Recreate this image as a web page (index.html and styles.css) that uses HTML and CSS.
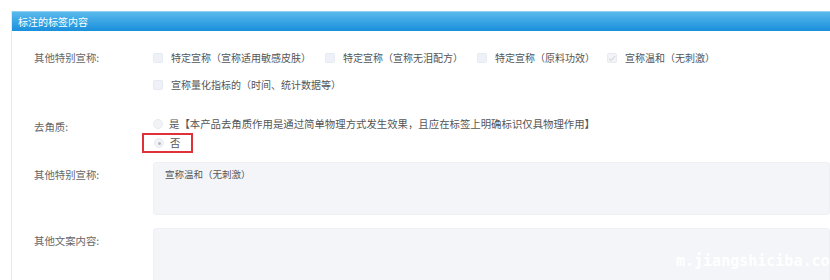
FILE: index.html
```html
<!DOCTYPE html>
<html lang="zh">
<head>
<meta charset="utf-8">
<link rel="stylesheet" href="styles.css">
</head>
<body>
<div class="panel">
  <div class="panel-head">标注的标签内容</div>
  <div class="panel-body">
    <div class="row row-checks">
      <div class="label">其他特别宣称:</div>
      <div class="field checks">
        <label class="opt"><span class="box"></span>特定宣称（宣称适用敏感皮肤）</label>
        <label class="opt"><span class="box"></span>特定宣称（宣称无泪配方）</label>
        <label class="opt"><span class="box"></span>特定宣称（原料功效）</label>
        <label class="opt"><span class="box checked"><svg width="8" height="7" viewBox="0 0 8 7"><path d="M1 3.5 L3.2 5.6 L7 1.2" fill="none" stroke="#c8ccd6" stroke-width="1"/></svg></span>宣称温和（无刺激）</label>
        <label class="opt"><span class="box"></span>宣称量化指标的（时间、统计数据等）</label>
      </div>
    </div>
    <div class="row row-radios">
      <div class="label">去角质:</div>
      <div class="field radios">
        <label class="opt"><span class="radio"></span>是【本产品去角质作用是通过简单物理方式发生效果，且应在标签上明确标识仅具物理作用】</label>
        <label class="opt opt-marked"><span class="radio on"></span>否</label>
      </div>
    </div>
    <div class="row row-text">
      <div class="label">其他特别宣称:</div>
      <div class="field"><div class="textarea">宣称温和（无刺激）</div></div>
    </div>
    <div class="row row-text">
      <div class="label">其他文案内容:</div>
      <div class="field"><div class="textarea tall"></div></div>
    </div>
  </div>
</div>
<div class="watermark">m.jiangshiciba.com</div>
</body>
</html>
```
FILE: styles.css
```css
html, body {
  margin: 0;
  padding: 0;
  background: #fff;
  overflow: hidden;
}
body {
  width: 830px;
  height: 280px;
  font-family: "Noto Sans CJK SC", "Noto Sans", sans-serif;
  font-size: 10.4px;
  color: #555;
  position: relative;
}
.panel {
  margin: 11px 0 0 11px;
  border-left: 1px solid #e6e9ee;
  height: 269px;
}
.panel-head {
  height: 20px;
  line-height: 19px;
  padding-left: 6px;
  color: #fff;
  font-size: 10px;
  background: linear-gradient(#5ab9ec, #1a8fdc);
  border-top: 1px solid #8fd0f3;
  box-sizing: border-box;
}
.panel-body {
  padding-top: 18px;
}
.row {
  display: flex;
}
.label {
  width: 141px;
  padding-left: 22px;
  box-sizing: border-box;
  flex: none;
  color: #666;
  font-size: 10.4px;
  line-height: 18px;
}
.field {
  flex: 1;
}
.checks {
  display: flex;
  flex-wrap: wrap;
  row-gap: 9px;
}
.opt {
  display: flex;
  align-items: center;
  height: 18px;
  line-height: 18px;
  font-size: 10.4px;
  color: #555;
  white-space: nowrap;
}
.checks .opt {
  font-size: 10px;
  margin-right: 14px;
}
.checks .opt:nth-child(3) { margin-right: 12px; }
.checks .opt:nth-child(4) { margin-right: 0; }
.box {
  width: 10px;
  height: 10px;
  box-sizing: border-box;
  border: 1px solid #e6eaf2;
  background: #eef1f8;
  border-radius: 2px;
  margin-right: 8px;
  display: flex;
  align-items: center;
  justify-content: center;
  flex: none;
}
.box.checked {
  background: #f3f4f7;
  border-color: #e8eaef;
}
.row-radios {
  margin-top: 21px;
  align-items: flex-start;
}
.row-radios .label { padding-top: 3px; }
.radios {
  display: flex;
  flex-direction: column;
}
.radio {
  width: 10px;
  height: 10px;
  box-sizing: border-box;
  border-radius: 50%;
  border: 1px solid #e8ebf0;
  background: #f1f3f7;
  margin-right: 6px;
  flex: none;
  position: relative;
}
.radio.on::after {
  content: "";
  position: absolute;
  width: 3px;
  height: 3px;
  border-radius: 50%;
  background: #b5b9c2;
  left: 2.5px;
  top: 2.5px;
}
.opt-marked {
  align-self: flex-start;
  box-sizing: border-box;
  border: 2px solid #e0313a;
  width: 51px;
  height: 20px;
  margin-left: -11px;
  padding-left: 10px;
}
.row-text {
  margin-top: 9px;
}
.row-text .label {
  padding-top: 4px;
}
.row-text + .row-text {
  margin-top: 13px;
}
.textarea {
  background: #f4f5f9;
  border: 1px solid #eef0f4;
  border-radius: 3px;
  height: 53px;
  box-sizing: border-box;
  padding: 4px 11px;
  font-size: 9.5px;
  line-height: 14px;
  color: #555;
}
.textarea.tall {
  height: 60px;
}
.watermark {
  position: absolute;
  left: 676px;
  top: 252px;
  font-family: "DejaVu Sans Mono", "Liberation Mono", monospace;
  font-weight: bold;
  font-size: 15px;
  color: #ffffff;
}
```
